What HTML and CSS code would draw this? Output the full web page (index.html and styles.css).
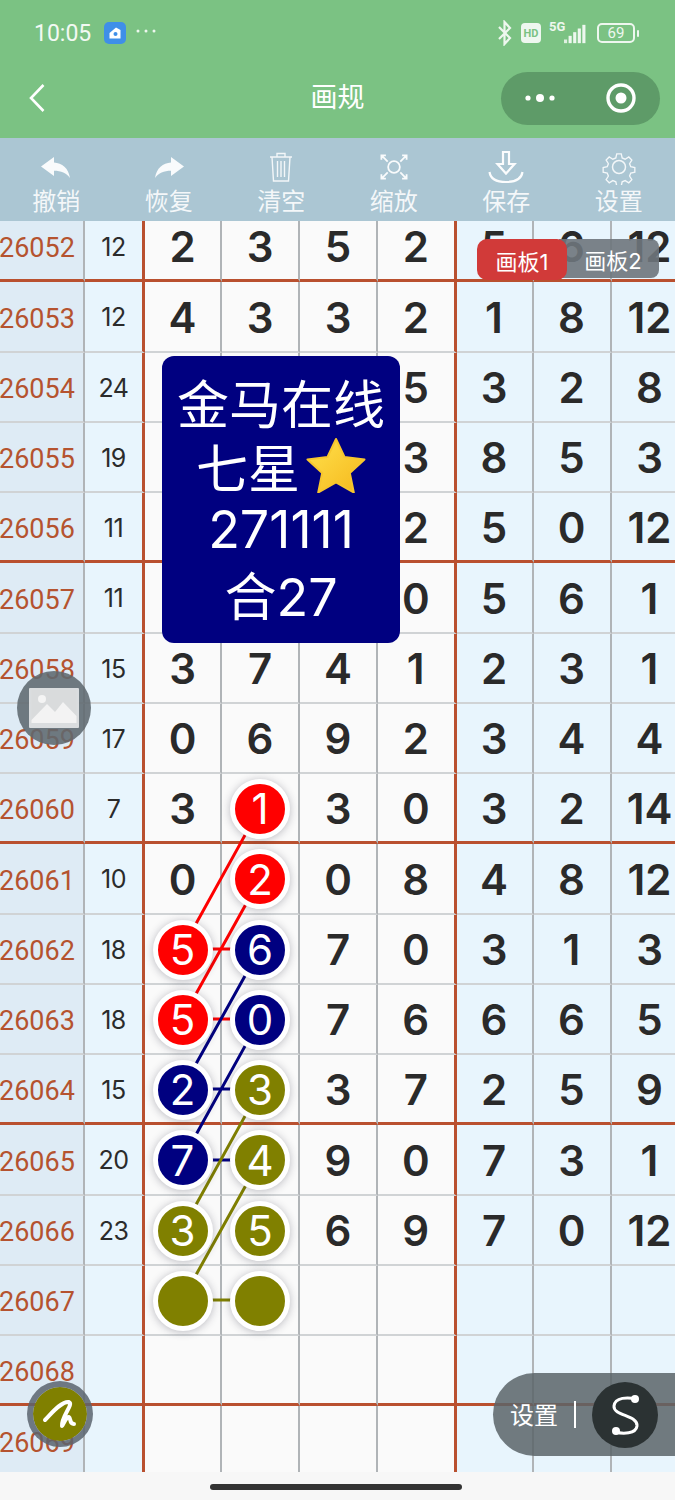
FILE: index.html
```html
<!DOCTYPE html>
<html lang="zh">
<head>
<meta charset="utf-8">
<title>画规</title>
<link rel="stylesheet" href="styles.css">
</head>
<body>
<div class="app">
  <header class="top">
    <div class="status">
      <div class="status-left">
        <span class="time">10:05</span>
        <svg class="appicon" viewBox="0 0 22 22"><rect width="22" height="22" rx="5" fill="#3f8fe8"/><path d="M5.500 11 12 5.500 16.500 8v8.500h-11z" fill="#fff"/><circle cx="11.500" cy="12" r="2" fill="#3f8fe8"/></svg>
        <svg class="more" viewBox="0 0 20 4"><circle cx="2" cy="2" r="1.500" fill="#eef7ef"/><circle cx="10" cy="2" r="1.500" fill="#eef7ef"/><circle cx="18" cy="2" r="1.500" fill="#eef7ef"/></svg>
      </div>
      <div class="status-right">
        <svg class="bt" viewBox="0 0 16 26"><path d="M2 7l11 11-5.500 6V2L13 8 2 19" fill="none" stroke="#eef7ef" stroke-width="2.200"/></svg>
        <span class="hd">HD</span>
        <span class="net"><span class="fiveg">5G</span>
          <svg class="bars" viewBox="0 0 24 24"><rect x="0" y="18" width="3.400" height="4" fill="#dff0e1"/><rect x="5" y="14" width="3.400" height="8" fill="#eef7ef"/><rect x="10" y="10" width="3.400" height="12" fill="#eef7ef"/><rect x="15" y="6" width="3.400" height="16" fill="#eef7ef"/><rect x="20" y="2" width="3.400" height="20" fill="#eef7ef"/></svg>
        </span>
        <span class="battery"><span class="batt-body">69</span><span class="batt-tip"></span></span>
      </div>
    </div>
    <nav class="nav">
      <svg class="back" viewBox="0 0 18 30"><path d="M15.500 2 3 15l12.500 13" fill="none" stroke="#fff" stroke-width="2.600"/></svg>
      <h1 class="title">画规</h1>
      <div class="capsule">
        <svg class="cap-dots" viewBox="0 0 34 12"><circle cx="5" cy="6" r="2.600" fill="#fff"/><circle cx="17" cy="6" r="4" fill="#fff"/><circle cx="29" cy="6" r="2.600" fill="#fff"/></svg>
        <svg class="cap-target" viewBox="0 0 32 32"><circle cx="16" cy="16" r="13" fill="none" stroke="#fff" stroke-width="3.400"/><circle cx="16" cy="16" r="5.500" fill="#fff"/></svg>
      </div>
    </nav>
  </header>

  <div class="toolbar">
    <div class="tool">
      <svg class="ti" viewBox="0 0 36 36"><path d="M16 8v5.500C24 14 30.500 19 32 29c-3.500-5-9-7.200-16-7.200V27L3 17.500z" fill="#fff" fill-opacity=".92"/></svg>
      <span>撤销</span>
    </div>
    <div class="tool">
      <svg class="ti" viewBox="0 0 36 36"><path d="M20 8v5.500C12 14 5.500 19 4 29c3.500-5 9-7.200 16-7.200V27l13-9.500z" fill="#fff" fill-opacity=".92"/></svg>
      <span>恢复</span>
    </div>
    <div class="tool">
      <svg class="ti" viewBox="0 0 36 36" fill="none" stroke="#fff" stroke-opacity=".85" stroke-width="1.400"><path d="M7 8h22M14 8V4.500h8V8M9 8l1.500 24h15L27 8M14.500 12v16M18 12v16M21.500 12v16"/></svg>
      <span>清空</span>
    </div>
    <div class="tool">
      <svg class="ti" viewBox="-2 -2 40 40" fill="none" stroke="#fff" stroke-opacity=".92" stroke-width="2"><circle cx="18" cy="18" r="6.500"/><path d="M4 10V5h5M27 5h5v5M4 26v5h5M27 31h5v-5M5 6l6 6M31 6l-6 6M5 30l6-6M31 30l-6-6"/></svg>
      <span>缩放</span>
    </div>
    <div class="tool">
      <svg class="ti" viewBox="0 0 36 36" fill="none" stroke="#fff" stroke-opacity=".95" stroke-width="2.200"><path d="M15 3h6v12h5.500L18 24.500 9.500 15H15zM1.500 23c1 7 8 10 16.500 10s15.500-3 16.500-10"/></svg>
      <span>保存</span>
    </div>
    <div class="tool">
      <svg class="ti" viewBox="0 0 36 36" fill="none" stroke="#fff" stroke-opacity=".85" stroke-width="1.500"><circle cx="18" cy="18" r="6.500"/><path d="M15.500 3.500h5l1 4.500 3.300 1.400 4-2.500 3.400 3.500-2.500 4 1.300 3.300 4.500 1v5l-4.500 1-1.300 3.300 2.500 4-3.400 3.500-4-2.500-3.300 1.400-1 4.500h-5l-1-4.500-3.300-1.400-4 2.500-3.400-3.500 2.500-4-1.300-3.300-4.500-1v-5l4.500-1 1.300-3.300-2.500-4 3.400-3.500 4 2.500L14.500 8z" transform="translate(1.700 1.700) scale(.905)"/></svg>
      <span>设置</span>
    </div>
  </div>

  <main class="board">
    <div class="grid">
      <div class="c id">26052</div><div class="c sum">12</div><div class="c n">2</div><div class="c n">3</div><div class="c n">5</div><div class="c n e">2</div><div class="c n r">5</div><div class="c n r">6</div><div class="c n r">12</div>
      <div class="c id">26053</div><div class="c sum">12</div><div class="c n">4</div><div class="c n">3</div><div class="c n">3</div><div class="c n e">2</div><div class="c n r">1</div><div class="c n r">8</div><div class="c n r">12</div>
      <div class="c id">26054</div><div class="c sum">24</div><div class="c n"></div><div class="c n"></div><div class="c n"></div><div class="c n e">5</div><div class="c n r">3</div><div class="c n r">2</div><div class="c n r">8</div>
      <div class="c id">26055</div><div class="c sum">19</div><div class="c n"></div><div class="c n"></div><div class="c n"></div><div class="c n e">3</div><div class="c n r">8</div><div class="c n r">5</div><div class="c n r">3</div>
      <div class="c id">26056</div><div class="c sum">11</div><div class="c n"></div><div class="c n"></div><div class="c n"></div><div class="c n e">2</div><div class="c n r">5</div><div class="c n r">0</div><div class="c n r">12</div>
      <div class="c id">26057</div><div class="c sum">11</div><div class="c n"></div><div class="c n"></div><div class="c n"></div><div class="c n e">0</div><div class="c n r">5</div><div class="c n r">6</div><div class="c n r">1</div>
      <div class="c id">26058</div><div class="c sum">15</div><div class="c n">3</div><div class="c n">7</div><div class="c n">4</div><div class="c n e">1</div><div class="c n r">2</div><div class="c n r">3</div><div class="c n r">1</div>
      <div class="c id">26059</div><div class="c sum">17</div><div class="c n">0</div><div class="c n">6</div><div class="c n">9</div><div class="c n e">2</div><div class="c n r">3</div><div class="c n r">4</div><div class="c n r">4</div>
      <div class="c id">26060</div><div class="c sum">7</div><div class="c n">3</div><div class="c n"><span class="ball red">1</span></div><div class="c n">3</div><div class="c n e">0</div><div class="c n r">3</div><div class="c n r">2</div><div class="c n r">14</div>
      <div class="c id">26061</div><div class="c sum">10</div><div class="c n">0</div><div class="c n"><span class="ball red">2</span></div><div class="c n">0</div><div class="c n e">8</div><div class="c n r">4</div><div class="c n r">8</div><div class="c n r">12</div>
      <div class="c id">26062</div><div class="c sum">18</div><div class="c n"><span class="ball red">5</span></div><div class="c n"><span class="ball navy">6</span></div><div class="c n">7</div><div class="c n e">0</div><div class="c n r">3</div><div class="c n r">1</div><div class="c n r">3</div>
      <div class="c id">26063</div><div class="c sum">18</div><div class="c n"><span class="ball red">5</span></div><div class="c n"><span class="ball navy">0</span></div><div class="c n">7</div><div class="c n e">6</div><div class="c n r">6</div><div class="c n r">6</div><div class="c n r">5</div>
      <div class="c id">26064</div><div class="c sum">15</div><div class="c n"><span class="ball navy">2</span></div><div class="c n"><span class="ball olive">3</span></div><div class="c n">3</div><div class="c n e">7</div><div class="c n r">2</div><div class="c n r">5</div><div class="c n r">9</div>
      <div class="c id">26065</div><div class="c sum">20</div><div class="c n"><span class="ball navy">7</span></div><div class="c n"><span class="ball olive">4</span></div><div class="c n">9</div><div class="c n e">0</div><div class="c n r">7</div><div class="c n r">3</div><div class="c n r">1</div>
      <div class="c id">26066</div><div class="c sum">23</div><div class="c n"><span class="ball olive">3</span></div><div class="c n"><span class="ball olive">5</span></div><div class="c n">6</div><div class="c n e">9</div><div class="c n r">7</div><div class="c n r">0</div><div class="c n r">12</div>
      <div class="c id">26067</div><div class="c sum"></div><div class="c n"><span class="ball olive"></span></div><div class="c n"><span class="ball olive"></span></div><div class="c n"></div><div class="c n e"></div><div class="c n r"></div><div class="c n r"></div><div class="c n r"></div>
      <div class="c id">26068</div><div class="c sum"></div><div class="c n"></div><div class="c n"></div><div class="c n"></div><div class="c n e"></div><div class="c n r"></div><div class="c n r"></div><div class="c n r"></div>
      <div class="c id">26069</div><div class="c sum"></div><div class="c n"></div><div class="c n"></div><div class="c n"></div><div class="c n e"></div><div class="c n r"></div><div class="c n r"></div><div class="c n r"></div>
    </div>
    <svg class="links" viewBox="0 0 675 1251">
      <g stroke="#f00" class="lk"><path d="M260 587 182 728M260 658 182 798M182 728H260M182 798H260"/></g>
      <g stroke="#000080" class="lk"><path d="M260 728 182 868M260 798 182 939M182 868H260M182 939H260"/></g>
      <g stroke="#808000" class="lk"><path d="M260 868 182 1009M260 939 182 1079M182 1079H260"/></g>
    </svg>
  </main>

  <footer class="foot"><span class="home"></span></footer>

  <aside class="notice">
    <p>金马在线</p>
    <p>七星<svg class="star" viewBox="0 0 60 56"><defs><linearGradient id="sg" x1="0" y1="0" x2="1" y2="1"><stop offset="0" stop-color="#ffe14d"/><stop offset="1" stop-color="#f5b81c"/></linearGradient></defs><path d="M30 2l8.500 18 20 2.500-14.700 13.500 4 19.500L30 45.500 12.200 55.500l4-19.500L1.500 22.500l20-2.500z" fill="url(#sg)" stroke="#f7c62e" stroke-linejoin="round" stroke-width="2"/></svg></p>
    <p>271111</p>
    <p>合27</p>
  </aside>

  <div class="tabs">
    <span class="tab tab2">画板2</span>
    <span class="tab tab1">画板1</span>
  </div>

  <div class="fab-img">
    <svg viewBox="0 0 50 40"><rect width="50" height="40" rx="1" fill="#fff" fill-opacity=".75"/><rect x="2.500" y="2" width="45" height="33" fill="#d9dbdc"/><circle cx="13" cy="11" r="4" fill="#f4f4f4"/><path d="M2.500 32 18 16l8 8 8-10 13.500 14v7h-45z" fill="#f3f3f3"/></svg>
  </div>

  <div class="fab-pen">
    <svg viewBox="0 0 54 54"><path d="M12 33C18 27 28 14 36 15C41 17 28 30 29 39C31 36 34 29 36 30C38 31 36 37 41 37" fill="none" stroke="#fff" stroke-width="4" stroke-linecap="round" stroke-linejoin="round"/></svg>
  </div>

  <div class="pill">
    <span class="pill-text">设置</span>
    <span class="pill-sep"></span>
    <span class="pill-s">
      <svg viewBox="0 0 66 66"><path d="M44 17C36 15 23 15 22 24c-1 10 24 9 23 20-1 8-14 8-22 6" fill="none" stroke="#fff" stroke-width="3"/><circle cx="43" cy="17" r="4" fill="#fff"/><circle cx="24" cy="49" r="4" fill="#fff"/></svg>
    </span>
  </div>
</div>
</body>
</html>
```
FILE: styles.css
```css
* { box-sizing: border-box; }
html, body { margin: 0; padding: 0; }
body { font-family: Inter, "Noto Sans CJK SC", sans-serif; background: #f7f7f7; }
.app { position: relative; width: 675px; height: 1500px; overflow: hidden; display: flex; flex-direction: column; }

.top { background: #7bc283; height: 138px; flex: none; color: #fff; }
.status { height: 66px; padding: 0 36px 0 34px; display: flex; justify-content: space-between; align-items: center; }
.status-left { display: flex; align-items: center; }
.time { font-family: Roboto, sans-serif; font-size: 23px; color: #f2f9f3; width: 70px; }
.appicon { width: 22px; height: 22px; }
.more { width: 20px; height: 4px; margin-left: 10px; margin-bottom: 4px; }
.status-right { display: flex; align-items: center; gap: 8px; }
.bt { width: 16px; height: 26px; }
.hd { width: 20px; height: 20px; border-radius: 4px; background: #eef7ef; color: #7bc283; font-family: Roboto, sans-serif; font-size: 11px; font-weight: 700; display: flex; align-items: center; justify-content: center; }
.net { position: relative; width: 38px; height: 24px; display: block; margin-right: 1px; }
.fiveg { position: absolute; left: 0; top: -2px; font-family: Roboto, sans-serif; font-size: 13px; font-weight: 700; color: #eef7ef; }
.bars { position: absolute; right: -1px; top: 2px; width: 26px; height: 22px; }
.battery { display: flex; align-items: center; gap: 2px; margin-left: 1px; }
.batt-body { width: 38px; height: 20px; border: 2px solid #eef7ef; border-radius: 5px; font-family: Roboto, sans-serif; font-size: 15px; line-height: 16px; text-align: center; color: #eef7ef; }
.batt-tip { width: 2px; height: 7px; background: #eef7ef; border-radius: 1px; }

.nav { height: 72px; padding: 0 15px 8px 28px; display: flex; align-items: center; justify-content: space-between; position: relative; }
.back { width: 18px; height: 30px; }
.title { margin: 0; font-size: 27px; font-weight: 400; position: absolute; left: 0; right: 0; top: 14px; text-align: center; line-height: 36px; }
.capsule { width: 159px; height: 53px; border-radius: 27px; background: #5e9b68; padding: 0 23px 0 22px; display: flex; align-items: center; justify-content: space-between; }
.cap-dots { width: 34px; height: 12px; }
.cap-target { width: 32px; height: 32px; }

.toolbar { background: #abc6d3; height: 83px; flex: none; display: grid; grid-template-columns: repeat(6, 1fr); }
.tool { display: flex; flex-direction: column; align-items: center; padding-top: 11px; color: rgba(255,255,255,.88); font-size: 24px; line-height: 34px; }
.ti { width: 36px; height: 36px; flex: none; }

.board { position: relative; height: 1251px; flex: none; overflow: hidden; }
.grid { display: grid; grid-template-columns: 85px 60px 77px 78px 78px 78.500px 77px 78px 78px; grid-auto-rows: 70.250px; margin-top: -9px; width: 689.500px; }
.c { display: flex; align-items: center; justify-content: center; padding-top: 2px; border-right: 2px solid #b0b4b7; border-bottom: 2px solid #d0d3d5; min-width: 0; }
.c:nth-child(36n+1), .c:nth-child(36n+2), .c:nth-child(36n+3), .c:nth-child(36n+4), .c:nth-child(36n+5), .c:nth-child(36n+6), .c:nth-child(36n+7), .c:nth-child(36n+8), .c:nth-child(36n+9) { border-bottom: 3px solid #b9502f; }
.id { font-family: Roboto, sans-serif; background: #deebf5; color: #b5532f; font-size: 27px; justify-content: flex-start; white-space: nowrap; text-indent: -1px; padding-top: 5px; }
.sum { background: #e8f5fd; color: #2b2b2b; font-size: 25px; letter-spacing: -.5px; border-right: 3px solid #b9502f; }
.n { background: #fafafa; color: #2a2a2a; font-size: 42px; font-weight: 600; }
.e { border-right: 3px solid #b9502f; }
.r { background: #e8f5fd; }
.ball { position: relative; z-index: 2; width: 60px; height: 60px; border-radius: 50%; border: 5px solid #fff; box-shadow: 0 1px 8px rgba(40,40,60,.3); display: flex; align-items: center; justify-content: center; color: #fff; font-size: 42px; font-weight: 400; flex: none; }
.red { background: #f00; }
.navy { background: #000080; }
.olive { background: #808000; }
.links { position: absolute; left: 0; top: 0; width: 675px; height: 1251px; z-index: 1; pointer-events: none; }
.lk { stroke-width: 3; fill: none; }

.foot { flex: 1; background: #f7f7f7; display: flex; justify-content: center; align-items: flex-start; padding-top: 12px; }
.home { width: 252px; height: 6px; border-radius: 3px; background: #333; margin-left: -3px; }

.notice { position: absolute; left: 162px; top: 356px; width: 238px; height: 287px; border-radius: 12px; background: #000080; color: #fff; font-size: 52px; text-align: center; padding-top: 13px; z-index: 3; }
.notice p { margin: 0; display: flex; justify-content: center; align-items: center; height: 64px; }
.star { width: 60px; height: 56px; margin-left: 6px; }

.tabs { position: absolute; left: 477px; top: 239px; width: 182px; height: 42px; z-index: 3; }
.tab { position: absolute; top: 0; display: flex; align-items: center; justify-content: center; color: #fff; font-size: 22px; }
.tab1 { left: 0; width: 90px; height: 41px; border-radius: 10px; background: #d13a39; }
.tab2 { right: 0; width: 100px; height: 39px; border-radius: 0 8px 8px 0; background: rgba(110,118,124,.9); padding-left: 8px; }

.fab-img { position: absolute; left: 17px; top: 671px; width: 74px; height: 74px; border-radius: 50%; background: rgba(95,105,112,.88); display: flex; align-items: center; justify-content: center; z-index: 3; }
.fab-img svg { width: 50px; height: 40px; }
.fab-pen { position: absolute; left: 27px; top: 1381px; width: 66px; height: 66px; border-radius: 50%; background: #808000; border: 6px solid rgba(90,100,110,.85); background-clip: padding-box; z-index: 3; }
.fab-pen svg { width: 54px; height: 54px; display: block; }

.pill { position: absolute; left: 493px; top: 1373px; width: 182px; height: 83px; border-radius: 42px 0 0 42px; background: rgba(90,100,105,.85); display: flex; align-items: center; padding-left: 17px; color: #fff; font-size: 24px; z-index: 3; }
.pill-text { line-height: 34px; margin-top: 2px; }
.pill-sep { width: 2px; height: 27px; background: #fff; margin-left: 16px; }
.pill-s { width: 66px; height: 66px; border-radius: 50%; background: #2b3233; margin-left: 16px; flex: none; }
.pill-s svg { width: 66px; height: 66px; display: block; }
```
